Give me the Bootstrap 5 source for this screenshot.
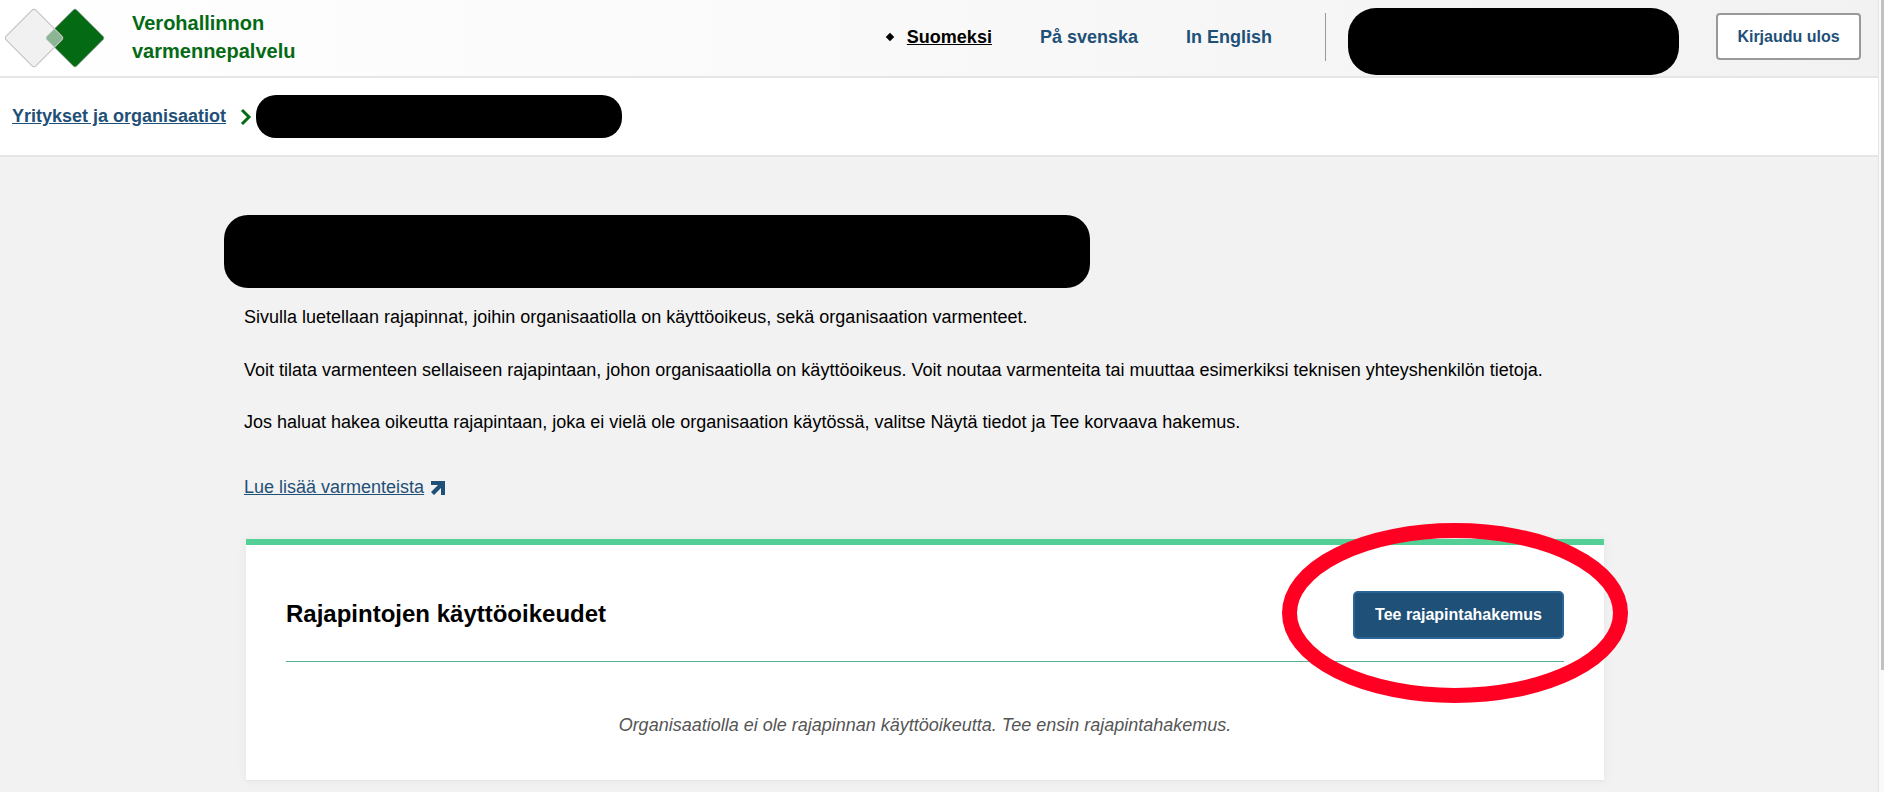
<!DOCTYPE html>
<html lang="fi">
<head>
    <meta charset="UTF-8">
    <meta name="viewport" content="width=device-width, initial-scale=1.0">
    <title>Verohallinnon varmennepalvelu</title>
    <link href="https://cdn.jsdelivr.net/npm/bootstrap@5.3.0/dist/css/bootstrap.min.css" rel="stylesheet">
    <style>
        html, body {
            height: 100%;
            overflow: hidden;
        }
        body {
            font-family: "Liberation Sans", Arial, sans-serif;
            font-size: 16px;
            color: #000;
            background: #f2f2f2;
        }
        .page-wrap {
            height: 792px;
        }
        .page-main {
            flex: 1 1 auto;
            min-width: 0;
            position: relative;
        }
        .fake-scroll {
            width: 6px;
            flex: 0 0 6px;
            background: #fafafa;
            border-left: 1px solid #e4e4e4;
            padding-left: 2px;
        }
        .fake-scroll div {
            width: 3px;
            height: 670px;
            background: #c2c2c2;
        }
        .top-bar {
            height: 78px;
            background: linear-gradient(90deg, #fff 0%, #f2f2f2 100%);
            border-bottom: 2px solid #e6e6e6;
            padding: 8px 17px 0 4px;
        }
        .logo-mark {
            margin-top: -1px;
        }
        .brand-name {
            color: #046a14;
            font-size: 20px;
            font-weight: 700;
            line-height: 28px;
            margin-left: 26px;
            margin-top: 1px;
        }
        .lang-list {
            gap: 48px;
            margin-bottom: 10px;
        }
        .lang-list a {
            color: #1f5077;
            font-size: 18px;
            font-weight: 700;
            text-decoration: none;
        }
        .lang-list a.on {
            color: #000;
            text-decoration: underline;
        }
        .lang-dot {
            width: 6px;
            height: 6px;
            background: #000;
            transform: rotate(45deg);
            margin-right: 14px;
        }
        .top-sep {
            width: 1px;
            height: 48px;
            background: #999;
            margin: 5px 22px 0 53px;
        }
        .blob {
            background: #000;
        }
        .blob-user {
            width: 331px;
            height: 67px;
            border-radius: 28px;
        }
        .btn-logout {
            width: 145px;
            height: 47px;
            margin: 5px 0 0 37px;
            background: #fff;
            border: 2px solid #999;
            border-radius: 4px;
            color: #1f5077;
            font-size: 16px;
            font-weight: 700;
            padding: 0;
        }
        .crumb-bar {
            height: 79px;
            background: #fff;
            border-bottom: 2px solid #e6e6e6;
            padding-left: 12px;
        }
        .crumb-bar a {
            color: #1f5077;
            font-size: 18px;
            font-weight: 700;
        }
        .crumb-arrow {
            margin-left: 14px;
        }
        .blob-crumb {
            width: 366px;
            height: 43px;
            border-radius: 20px;
            margin-left: 4px;
        }
        .content-col {
            padding: 58px 0 0 246px;
            width: 1604px;
        }
        .blob-title {
            width: 866px;
            height: 73px;
            border-radius: 24px;
            margin-left: -22px;
        }
        .intro {
            padding: 17px 0 0;
            margin-left: -2px;
        }
        .intro p {
            font-size: 18px;
            line-height: 24px;
            margin: 0 0 28.5px;
        }
        .more-link {
            margin: 41px 0 0 -2px;
            font-size: 18px;
            line-height: 24px;
        }
        .more-link a {
            color: #1f5077;
        }
        .more-arrow {
            margin-left: 2px;
            vertical-align: -2px;
        }
        .rights-panel {
            margin-top: 40px;
            height: 242px;
            background: #fff;
            border: 0;
            border-top: 6px solid #53d095;
            border-bottom: 1px solid #e6e6e6;
            border-radius: 0;
            box-shadow: 0 0 10px rgba(0, 0, 0, .06);
            padding: 0 40px;
        }
        .rights-head {
            height: 117px;
            padding-top: 23px;
            border-bottom: 1px solid #53b095;
        }
        .rights-head h2 {
            font-size: 24px;
            font-weight: 700;
            margin: 0;
        }
        .btn-apply {
            width: 211px;
            height: 48px;
            background: #1f5077;
            border: 2px solid #2a6596;
            border-radius: 5px;
            color: #fff;
            font-size: 16px;
            font-weight: 700;
            padding: 0;
        }
        .empty-note {
            color: #555;
            font-size: 18px;
            font-style: italic;
            text-align: center;
            margin: 50px 0 0;
        }
        .red-ring {
            position: absolute;
            left: 1282px;
            top: 523px;
        }
    </style>
</head>
<body>
    <div class="page-wrap d-flex">
        <div class="page-main">
            <header class="top-bar d-flex">
                <svg class="logo-mark" width="102" height="62" viewBox="0 0 102 62">
                    <rect x="-21" y="-21" width="42" height="42" rx="2" transform="translate(71 31) rotate(45)" fill="#046a14" stroke="#999" stroke-width=".6"/>
                    <rect x="-21" y="-21" width="42" height="42" rx="3" transform="translate(30 31) rotate(45)" fill="#e8e8e8" fill-opacity=".6" stroke="#c4c4c4" stroke-width="1.2"/>
                </svg>
                <div class="brand-name">Verohallinnon<br>varmennepalvelu</div>
                <div class="lang-list d-flex align-items-center ms-auto">
                    <div class="d-flex align-items-center">
                        <span class="lang-dot"></span>
                        <a class="on" href="#">Suomeksi</a>
                    </div>
                    <a href="#">På svenska</a>
                    <a href="#">In English</a>
                </div>
                <div class="top-sep"></div>
                <div class="blob blob-user"></div>
                <button class="btn-logout" type="button">Kirjaudu ulos</button>
            </header>
            <nav class="crumb-bar d-flex align-items-center">
                <a href="#">Yritykset ja organisaatiot</a>
                <svg class="crumb-arrow" width="12" height="18" viewBox="0 0 12 18">
                    <path d="M2 2l7 7-7 7" fill="none" stroke="#046a14" stroke-width="3"/>
                </svg>
                <div class="blob blob-crumb"></div>
            </nav>
            <main class="content-col">
                <div class="blob blob-title"></div>
                <div class="intro">
                    <p>Sivulla luetellaan rajapinnat, joihin organisaatiolla on käyttöoikeus, sekä organisaation varmenteet.</p>
                    <p>Voit tilata varmenteen sellaiseen rajapintaan, johon organisaatiolla on käyttöoikeus. Voit noutaa varmenteita tai muuttaa esimerkiksi teknisen yhteyshenkilön tietoja.</p>
                    <p>Jos haluat hakea oikeutta rajapintaan, joka ei vielä ole organisaation käytössä, valitse Näytä tiedot ja Tee korvaava hakemus.</p>
                </div>
                <div class="more-link">
                    <a href="#">Lue lisää varmenteista</a>
                    <svg class="more-arrow" width="14" height="14" viewBox="0 0 14 14">
                        <path d="M0 0h14v14h-4V7L3 14 0 11l7-7H0z" fill="#1f5077"/>
                    </svg>
                </div>
                <section class="card rights-panel">
                    <div class="rights-head d-flex align-items-center justify-content-between">
                        <h2>Rajapintojen käyttöoikeudet</h2>
                        <button class="btn-apply" type="button">Tee rajapintahakemus</button>
                    </div>
                    <p class="empty-note">Organisaatiolla ei ole rajapinnan käyttöoikeutta. Tee ensin rajapintahakemus.</p>
                </section>
            </main>
            <svg class="red-ring" width="346" height="180" viewBox="0 0 346 180">
                <ellipse cx="173" cy="90" rx="165.5" ry="82.5" fill="none" stroke="#ff0022" stroke-width="15"/>
            </svg>
        </div>
        <div class="fake-scroll"><div></div></div>
    </div>
</body>
</html>
